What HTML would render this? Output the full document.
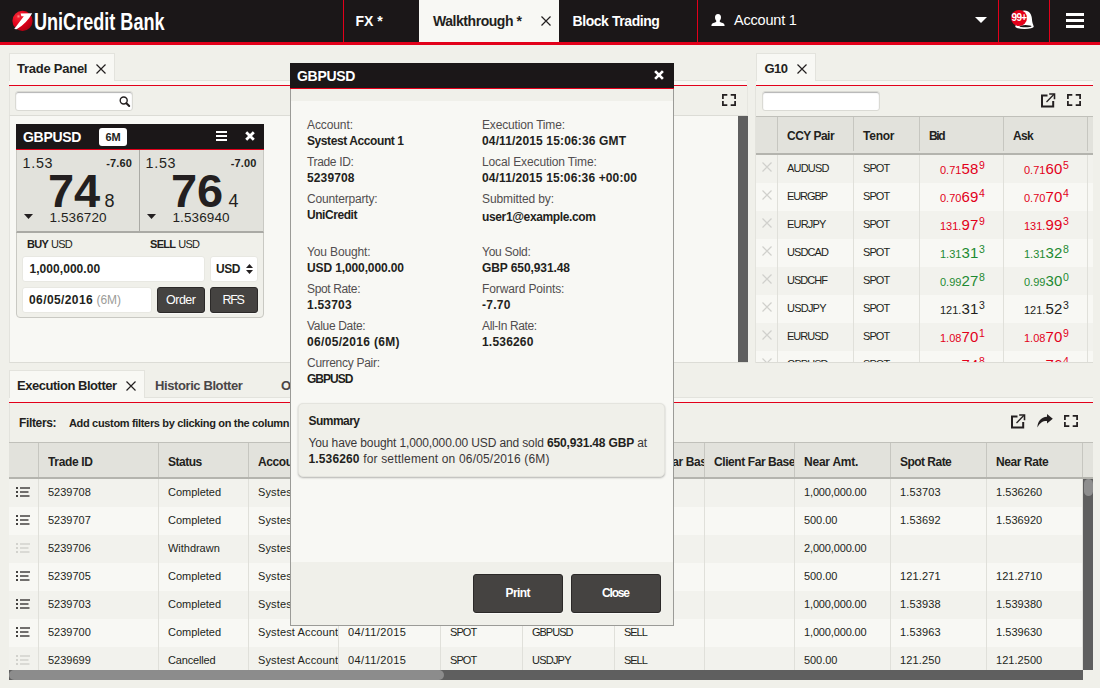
<!DOCTYPE html>
<html lang="en">
<head>
<meta charset="utf-8">
<title>UniCredit Bank - FX</title>
<style>
*{box-sizing:border-box;margin:0;padding:0}
html,body{width:1100px;height:688px;overflow:hidden}
body{position:relative;background:#f0f0ea;font-family:"Liberation Sans",sans-serif;font-size:12px;color:#231f20}
.abs{position:absolute}
.t{position:absolute;white-space:nowrap;line-height:1;letter-spacing:-0.3px}
.b{font-weight:bold}
.w{color:#fff}
svg{position:absolute;overflow:visible}
/* header */
#hdr{position:absolute;left:0;top:0;width:1100px;height:45px;background:#1b1718;border-bottom:3px solid #e2001a}
.vsep{position:absolute;top:0;width:1px;height:42px;background:#e2001a}
#tabwalk{position:absolute;left:419px;top:0;width:140px;height:42px;background:#f8f8f4}
/* panels */
.light{background:#f8f8f4}
.redline{position:absolute;height:1px;background:#e2001a}
.tab{position:absolute;background:#f8f8f4;border:1px solid #e3e3dd;border-bottom:none}
.inp{position:absolute;background:#fff;border:1px solid #dadad4;border-radius:3px}
.btn{position:absolute;background:#454341;border:1px solid #2b2928;border-radius:3px;box-shadow:0 1px 0 rgba(255,255,255,.6)}
.ghdr{position:absolute;background:#e2e2dc;border-top:1px solid #c0c0ba;border-bottom:2px solid #b4b4ae}
.csep{position:absolute;width:1px;background:#c6c6c0}
.rsep{position:absolute;width:1px;background:#e0e0da}
.row{position:absolute;height:28px}
.odd{background:#f2f2ed}
.even{background:#f8f8f4}
.c{position:absolute;white-space:nowrap;line-height:1;font-size:11px;letter-spacing:-0.2px;color:#231f20}
.h{position:absolute;white-space:nowrap;line-height:1;font-size:12px;font-weight:bold;letter-spacing:-0.3px;overflow:hidden}
.lbl{position:absolute;white-space:nowrap;line-height:1;font-size:12px;letter-spacing:-0.25px;color:#524e4f}
.val{position:absolute;white-space:nowrap;line-height:1;font-size:12px;font-weight:bold;letter-spacing:-0.1px;color:#231f20}
.red{color:#e2001a}
.grn{color:#1e8a32}
.px{position:absolute;white-space:nowrap;line-height:1;letter-spacing:0}
.px .s{font-size:11px}
.px .m{font-size:15px;letter-spacing:0.3px}
.px .u{font-size:10.5px;position:relative;top:-4.6px;margin-left:0.4px}
</style>
</head>
<body>
<!-- ===== HEADER ===== -->
<div id="hdr">
  <div id="tabwalk"></div>
  <div class="vsep" style="left:343px"></div>
  <div class="vsep" style="left:697px"></div>
  <div class="vsep" style="left:998px"></div>
  <div class="vsep" style="left:1049px"></div>
  <!-- logo -->
  <svg style="left:12px;top:10px" width="22" height="22" viewBox="0 0 22 22">
    <defs><radialGradient id="rg" cx="0.3" cy="0.28" r="0.85"><stop offset="0" stop-color="#ff8a8a"/><stop offset="0.12" stop-color="#f02030"/><stop offset="0.5" stop-color="#e2001a"/><stop offset="1" stop-color="#a80010"/></radialGradient></defs>
    <circle cx="10.5" cy="10.8" r="10.1" fill="url(#rg)"/>
    <path d="M8.6 3.4 L20.2 3.2 Q15 13 4.6 19.3 L2.2 19 L11.8 6.2 L9.4 6.2 Z" fill="#fff"/>
  </svg>
  <div class="t b w" id="logotxt" style="left:33.6px;top:10.5px;font-size:23px;letter-spacing:0;transform-origin:0 0;transform:scaleX(0.786)">UniCredit Bank</div>
  <!-- tabs -->
  <div class="t b w" style="left:355.5px;top:14.4px;font-size:14px;letter-spacing:0">FX *</div>
  <div class="t b" style="left:433px;top:14.4px;font-size:14px;letter-spacing:-0.45px">Walkthrough *</div>
  <svg style="left:541px;top:16px" width="10" height="10" viewBox="0 0 10 10"><path d="M0.5 0.5 L9.5 9.5 M9.5 0.5 L0.5 9.5" stroke="#231f20" stroke-width="1.2" fill="none"/></svg>
  <div class="t b w" style="left:572.5px;top:14.4px;font-size:14px;letter-spacing:-0.43px">Block Trading</div>
  <!-- account -->
  <svg style="left:711px;top:14px" width="14" height="12" viewBox="0 0 14 12"><path d="M7 0 C9 0 10 1.5 10 3.3 C10 5 9.3 6.3 8.6 6.9 C8.6 7.8 9.4 8.2 11 8.8 C12.8 9.5 13.6 10 13.6 12 L0.4 12 C0.4 10 1.2 9.5 3 8.8 C4.6 8.2 5.4 7.8 5.4 6.9 C4.7 6.3 4 5 4 3.3 C4 1.5 5 0 7 0 Z" fill="#fff"/></svg>
  <div class="t w" style="left:734px;top:12.9px;font-size:14.5px;letter-spacing:-0.2px">Account 1</div>
  <svg style="left:975px;top:17.3px" width="12" height="6" viewBox="0 0 12 6"><path d="M0 0 L12 0 L6 6 Z" fill="#fff"/></svg>
  <!-- bell + badge -->
  <svg style="left:1008px;top:8px" width="38" height="24" viewBox="0 0 38 24">
    <path d="M16.5 2.4 C21.5 2.4 23.6 6.5 23.9 10.5 C24.1 14 24.6 15.6 25.6 17.6 L7.4 17.6 C8.4 15.6 9 14 9.2 10.5 C9.4 6.5 11.5 2.4 16.5 2.4 Z" fill="#fff"/>
    <ellipse cx="16.5" cy="18.4" rx="9.3" ry="2.7" fill="#fff"/>
    <ellipse cx="17.5" cy="18.2" rx="6" ry="1.1" fill="#1b1718"/>
    <circle cx="11" cy="10" r="8" fill="#e2001a"/>
  </svg>
  <div class="t b w" style="left:1011.6px;top:13px;font-size:10px;letter-spacing:-0.75px">99+</div>
  <!-- hamburger -->
  <div class="abs" style="left:1066px;top:13px;width:18px;height:3px;background:#fff"></div>
  <div class="abs" style="left:1066px;top:19px;width:18px;height:3px;background:#fff"></div>
  <div class="abs" style="left:1066px;top:25px;width:18px;height:3px;background:#fff"></div>
</div>
<!-- ===== TRADE PANEL ===== -->
<div id="tp">
  <div class="tab" style="left:9px;top:53px;width:106px;height:28px"></div>
  <div class="abs light" style="left:9px;top:80px;width:738px;height:5px;border-top:1px solid #e3e3dd"></div>
  <div class="abs light" style="left:10px;top:80px;width:104px;height:2px"></div>
  <div class="redline" style="left:9px;top:85px;width:738px"></div>
  <div class="abs" style="left:9px;top:86px;width:739px;height:30px;border-left:1px solid #e3e3dd;border-right:1px solid #e6e6e0;border-bottom:1px solid #dcdcd6"></div>
  <div class="abs light" style="left:9px;top:116px;width:739px;height:247px;border-left:1px solid #e3e3dd;border-bottom:1px solid #dcdcd6"></div>
  <div class="abs" style="left:738px;top:116px;width:10px;height:246px;background:#5f5f5f"></div>
  <div class="t b" style="left:17px;top:62.2px;font-size:13px;letter-spacing:-0.25px">Trade Panel</div>
  <svg style="left:96px;top:64px" width="10" height="10" viewBox="0 0 10 10"><path d="M0.5 0.5 L9.5 9.5 M9.5 0.5 L0.5 9.5" stroke="#231f20" stroke-width="1.2" fill="none"/></svg>
  <!-- toolbar -->
  <div class="inp" style="left:15px;top:91px;width:118px;height:20px;box-shadow:inset 0 1px 1px rgba(0,0,0,.3)"></div>
  <svg style="left:118.5px;top:95.5px" width="11" height="11" viewBox="0 0 11 11"><circle cx="4.7" cy="4.5" r="3.5" stroke="#231f20" stroke-width="1.4" fill="none"/><path d="M7.4 7.2 L10.2 10" stroke="#231f20" stroke-width="2" stroke-linecap="round"/></svg>
  <svg style="left:722px;top:94px" width="14" height="12" viewBox="0 0 14 12"><path d="M0.9 5 V0.9 H5.3 M8.7 0.9 H13.1 V5 M13.1 7 V11.1 H8.7 M5.3 11.1 H0.9 V7" stroke="#231f20" stroke-width="1.75" fill="none"/></svg>

  <!-- tile -->
  <div class="abs" style="left:16px;top:124px;width:248px;height:194px;background:#f0f0ea;border:1px solid #c9c9c3;border-radius:0 0 4px 4px"></div>
  <div class="abs" style="left:16px;top:124px;width:248px;height:26px;background:#1b1718;border-bottom:1px solid #e2001a"></div>
  <div class="t b w" style="left:23px;top:130.3px;font-size:14px;letter-spacing:-0.3px">GBPUSD</div>
  <div class="abs" style="left:99px;top:128px;width:28px;height:18px;background:#fff;border-radius:3px"></div>
  <div class="t b" style="left:105.5px;top:132.2px;font-size:11px;letter-spacing:-0.2px">6M</div>
  <div class="abs" style="left:216px;top:131px;width:11px;height:2px;background:#fff"></div>
  <div class="abs" style="left:216px;top:135px;width:11px;height:2px;background:#fff"></div>
  <div class="abs" style="left:216px;top:139px;width:11px;height:2px;background:#fff"></div>
  <svg style="left:245px;top:131px" width="10" height="10" viewBox="0 0 10 10"><path d="M1.2 1.2 L8.8 8.8 M8.8 1.2 L1.2 8.8" stroke="#fff" stroke-width="2.8" fill="none"/></svg>
  <!-- price boxes -->
  <div class="abs" style="left:16px;top:150px;width:248px;height:83px;background:#e2e2dc;border-bottom:2px solid #aaaaa5;border-left:1px solid #c9c9c3;border-right:1px solid #c9c9c3"></div>
  <div class="abs" style="left:139px;top:150px;width:1px;height:82px;background:#aaaaa5"></div>

  <div class="px" style="left:22.6px;top:156.4px;font-size:14.3px;letter-spacing:0.7px">1.53</div>
  <div class="px b" style="right:968px;top:157.7px;font-size:11px;letter-spacing:0.15px">-7.60</div>
  <div class="px b" style="left:48px;top:166.8px;font-size:47px;letter-spacing:-0.2px">74</div>
  <div class="px" style="left:104.5px;top:191.5px;font-size:18px">8</div>
  <svg style="left:24px;top:214px" width="9" height="5" viewBox="0 0 9 5"><path d="M0 0 H9 L4.5 5 Z" fill="#231f20"/></svg>
  <div class="px" style="left:49.5px;top:210.7px;font-size:13.5px;letter-spacing:0.1px">1.536720</div>

  <div class="px" style="left:145.6px;top:156.4px;font-size:14.3px;letter-spacing:0.7px">1.53</div>
  <div class="px b" style="right:843.5px;top:157.7px;font-size:11px;letter-spacing:0.15px">-7.00</div>
  <div class="px b" style="left:171px;top:166.8px;font-size:47px;letter-spacing:-0.2px">76</div>
  <div class="px" style="left:228.5px;top:191.5px;font-size:18px">4</div>
  <svg style="left:147px;top:214px" width="9" height="5" viewBox="0 0 9 5"><path d="M0 0 H9 L4.5 5 Z" fill="#231f20"/></svg>
  <div class="px" style="left:172.5px;top:210.7px;font-size:13.5px;letter-spacing:0.1px">1.536940</div>

  <div class="t" style="left:27px;top:238.7px;font-size:11px;letter-spacing:-0.2px"><b style="letter-spacing:-0.7px">BUY</b> <span style="letter-spacing:-0.7px">USD</span></div>
  <div class="t" style="left:150px;top:238.7px;font-size:11px;letter-spacing:-0.2px"><b style="letter-spacing:-0.7px">SELL</b> <span style="letter-spacing:-0.7px">USD</span></div>
  <div class="inp" style="left:22px;top:256px;width:183px;height:26px;border-color:#e8e8e2;border-radius:3px"></div>
  <div class="t b" style="left:29.5px;top:263.3px;font-size:12px;letter-spacing:0.05px">1,000,000.00</div>
  <div class="inp" style="left:210px;top:256px;width:48px;height:26px;border-color:#e8e8e2;border-radius:3px"></div>
  <div class="t b" style="left:216px;top:263.3px;font-size:12px;letter-spacing:-0.4px">USD</div>
  <svg style="left:246px;top:264px" width="7" height="10" viewBox="0 0 7 10"><path d="M0 4 H7 L3.5 0 Z M0 6 H7 L3.5 10 Z" fill="#231f20"/></svg>
  <div class="inp" style="left:22px;top:287px;width:130px;height:26px;border-color:#e8e8e2;border-radius:3px"></div>
  <div class="t" style="left:29px;top:294.3px;font-size:12px;letter-spacing:0"><b style="letter-spacing:0.4px">06/05/2016</b> <span style="color:#9c9c98">(6M)</span></div>
  <div class="btn" style="left:157px;top:287px;width:48px;height:26px"></div>
  <div class="t w" style="left:166px;top:293.5px;font-size:12.5px;letter-spacing:-0.5px">Order</div>
  <div class="btn" style="left:210px;top:287px;width:48px;height:26px"></div>
  <div class="t w" style="left:222.5px;top:293.5px;font-size:12.5px;letter-spacing:-1.3px">RFS</div>
</div>
<!-- ===== G10 PANEL ===== -->
<div id="g10">
  <div class="tab" style="left:756px;top:53px;width:60px;height:28px"></div>
  <div class="abs light" style="left:756px;top:80px;width:337px;height:5px;border-top:1px solid #e3e3dd"></div>
  <div class="abs light" style="left:757px;top:80px;width:58px;height:2px"></div>
  <div class="redline" style="left:756px;top:85px;width:337px"></div>
  <div class="abs" style="left:755px;top:86px;width:1px;height:277px;background:#e3e3dd"></div>
  <div class="t b" style="left:764.5px;top:62.2px;font-size:13px;letter-spacing:-0.6px">G10</div>
  <svg style="left:797px;top:64px" width="10" height="10" viewBox="0 0 10 10"><path d="M0.5 0.5 L9.5 9.5 M9.5 0.5 L0.5 9.5" stroke="#231f20" stroke-width="1.2" fill="none"/></svg>
  <div class="inp" style="left:762px;top:91px;width:118px;height:20px;box-shadow:inset 0 1px 1px rgba(0,0,0,.3)"></div>
  <svg style="left:1041px;top:92.5px" width="15" height="15" viewBox="0 0 15 15"><path d="M6.5 2.5 H1 V13.5 H12.2 V8" stroke="#231f20" stroke-width="2" fill="none"/><path d="M5.5 9 L13 1.3" stroke="#231f20" stroke-width="1.3" fill="none"/><path d="M8.2 1 H13.5 V6.3" stroke="#231f20" stroke-width="1.6" fill="none"/></svg>
  <svg style="left:1067px;top:94px" width="14" height="12" viewBox="0 0 14 12"><path d="M0.9 5 V0.9 H5.3 M8.7 0.9 H13.1 V5 M13.1 7 V11.1 H8.7 M5.3 11.1 H0.9 V7" stroke="#231f20" stroke-width="1.75" fill="none"/></svg>
  <div class="abs" style="left:756px;top:116px;width:337px;height:247px;overflow:hidden;background:#f8f8f4;border-bottom:1px solid #dcdcd6">
    <div class="ghdr" style="left:0;top:0;width:337px;height:39px"></div>
    <div class="csep" style="left:21px;top:1px;height:34px"></div>
    <div class="csep" style="left:97px;top:1px;height:34px"></div>
    <div class="csep" style="left:163px;top:1px;height:34px"></div>
    <div class="csep" style="left:247px;top:1px;height:34px"></div>
    <div class="csep" style="left:331px;top:1px;height:34px"></div>
    <div class="h" style="left:31px;top:13.9px;overflow:visible;letter-spacing:-0.505px">CCY Pair</div>
    <div class="h" style="left:107px;top:13.9px;overflow:visible;letter-spacing:-0.236px">Tenor</div>
    <div class="h" style="left:173px;top:13.9px;overflow:visible;letter-spacing:-1.315px">Bid</div>
    <div class="h" style="left:257px;top:13.9px;overflow:visible;letter-spacing:-0.632px">Ask</div>
    <div class="row odd" style="left:0;top:39px;width:337px">
      <div class="rsep" style="left:21px;top:0;height:28px"></div>
      <div class="rsep" style="left:97px;top:0;height:28px"></div>
      <div class="rsep" style="left:163px;top:0;height:28px"></div>
      <div class="rsep" style="left:247px;top:0;height:28px"></div>
      <div class="rsep" style="left:331px;top:0;height:28px"></div>
      <svg style="left:5.5px;top:7px" width="10" height="10" viewBox="0 0 10 10"><path d="M0.5 0.5 L9.5 9.5 M9.5 0.5 L0.5 9.5" stroke="#d0d0cc" stroke-width="1.2" fill="none"/></svg>
      <div class="c" style="left:31px;top:7.7px;letter-spacing:-0.81px">AUDUSD</div>
      <div class="c" style="left:107px;top:7.7px;letter-spacing:-0.916px">SPOT</div>
      <div class="px red" style="left:184px;top:5.5px"><span class="s">0.71</span><span class="m">58</span><span class="u">9</span></div>
      <div class="px red" style="left:268px;top:5.5px"><span class="s">0.71</span><span class="m">60</span><span class="u">5</span></div>
    </div>
    <div class="row even" style="left:0;top:67px;width:337px">
      <div class="rsep" style="left:21px;top:0;height:28px"></div>
      <div class="rsep" style="left:97px;top:0;height:28px"></div>
      <div class="rsep" style="left:163px;top:0;height:28px"></div>
      <div class="rsep" style="left:247px;top:0;height:28px"></div>
      <div class="rsep" style="left:331px;top:0;height:28px"></div>
      <svg style="left:5.5px;top:7px" width="10" height="10" viewBox="0 0 10 10"><path d="M0.5 0.5 L9.5 9.5 M9.5 0.5 L0.5 9.5" stroke="#d0d0cc" stroke-width="1.2" fill="none"/></svg>
      <div class="c" style="left:31px;top:7.7px;letter-spacing:-1.091px">EURGBP</div>
      <div class="c" style="left:107px;top:7.7px;letter-spacing:-0.916px">SPOT</div>
      <div class="px red" style="left:184px;top:5.5px"><span class="s">0.70</span><span class="m">69</span><span class="u">4</span></div>
      <div class="px red" style="left:268px;top:5.5px"><span class="s">0.70</span><span class="m">70</span><span class="u">4</span></div>
    </div>
    <div class="row odd" style="left:0;top:95px;width:337px">
      <div class="rsep" style="left:21px;top:0;height:28px"></div>
      <div class="rsep" style="left:97px;top:0;height:28px"></div>
      <div class="rsep" style="left:163px;top:0;height:28px"></div>
      <div class="rsep" style="left:247px;top:0;height:28px"></div>
      <div class="rsep" style="left:331px;top:0;height:28px"></div>
      <svg style="left:5.5px;top:7px" width="10" height="10" viewBox="0 0 10 10"><path d="M0.5 0.5 L9.5 9.5 M9.5 0.5 L0.5 9.5" stroke="#d0d0cc" stroke-width="1.2" fill="none"/></svg>
      <div class="c" style="left:31px;top:7.7px;letter-spacing:-0.8px">EURJPY</div>
      <div class="c" style="left:107px;top:7.7px;letter-spacing:-0.916px">SPOT</div>
      <div class="px red" style="left:184px;top:5.5px"><span class="s">131.</span><span class="m">97</span><span class="u">9</span></div>
      <div class="px red" style="left:268px;top:5.5px"><span class="s">131.</span><span class="m">99</span><span class="u">3</span></div>
    </div>
    <div class="row even" style="left:0;top:123px;width:337px">
      <div class="rsep" style="left:21px;top:0;height:28px"></div>
      <div class="rsep" style="left:97px;top:0;height:28px"></div>
      <div class="rsep" style="left:163px;top:0;height:28px"></div>
      <div class="rsep" style="left:247px;top:0;height:28px"></div>
      <div class="rsep" style="left:331px;top:0;height:28px"></div>
      <svg style="left:5.5px;top:7px" width="10" height="10" viewBox="0 0 10 10"><path d="M0.5 0.5 L9.5 9.5 M9.5 0.5 L0.5 9.5" stroke="#d0d0cc" stroke-width="1.2" fill="none"/></svg>
      <div class="c" style="left:31px;top:7.7px;letter-spacing:-0.89px">USDCAD</div>
      <div class="c" style="left:107px;top:7.7px;letter-spacing:-0.916px">SPOT</div>
      <div class="px grn" style="left:184px;top:5.5px"><span class="s">1.31</span><span class="m">31</span><span class="u">3</span></div>
      <div class="px grn" style="left:268px;top:5.5px"><span class="s">1.31</span><span class="m">32</span><span class="u">8</span></div>
    </div>
    <div class="row odd" style="left:0;top:151px;width:337px">
      <div class="rsep" style="left:21px;top:0;height:28px"></div>
      <div class="rsep" style="left:97px;top:0;height:28px"></div>
      <div class="rsep" style="left:163px;top:0;height:28px"></div>
      <div class="rsep" style="left:247px;top:0;height:28px"></div>
      <div class="rsep" style="left:331px;top:0;height:28px"></div>
      <svg style="left:5.5px;top:7px" width="10" height="10" viewBox="0 0 10 10"><path d="M0.5 0.5 L9.5 9.5 M9.5 0.5 L0.5 9.5" stroke="#d0d0cc" stroke-width="1.2" fill="none"/></svg>
      <div class="c" style="left:31px;top:7.7px;letter-spacing:-0.966px">USDCHF</div>
      <div class="c" style="left:107px;top:7.7px;letter-spacing:-0.916px">SPOT</div>
      <div class="px grn" style="left:184px;top:5.5px"><span class="s">0.99</span><span class="m">27</span><span class="u">8</span></div>
      <div class="px grn" style="left:268px;top:5.5px"><span class="s">0.99</span><span class="m">30</span><span class="u">0</span></div>
    </div>
    <div class="row even" style="left:0;top:179px;width:337px">
      <div class="rsep" style="left:21px;top:0;height:28px"></div>
      <div class="rsep" style="left:97px;top:0;height:28px"></div>
      <div class="rsep" style="left:163px;top:0;height:28px"></div>
      <div class="rsep" style="left:247px;top:0;height:28px"></div>
      <div class="rsep" style="left:331px;top:0;height:28px"></div>
      <svg style="left:5.5px;top:7px" width="10" height="10" viewBox="0 0 10 10"><path d="M0.5 0.5 L9.5 9.5 M9.5 0.5 L0.5 9.5" stroke="#d0d0cc" stroke-width="1.2" fill="none"/></svg>
      <div class="c" style="left:31px;top:7.7px;letter-spacing:-0.78px">USDJPY</div>
      <div class="c" style="left:107px;top:7.7px;letter-spacing:-0.916px">SPOT</div>
      <div class="px " style="left:184px;top:5.5px"><span class="s">121.</span><span class="m">31</span><span class="u">3</span></div>
      <div class="px " style="left:268px;top:5.5px"><span class="s">121.</span><span class="m">52</span><span class="u">3</span></div>
    </div>
    <div class="row odd" style="left:0;top:207px;width:337px">
      <div class="rsep" style="left:21px;top:0;height:28px"></div>
      <div class="rsep" style="left:97px;top:0;height:28px"></div>
      <div class="rsep" style="left:163px;top:0;height:28px"></div>
      <div class="rsep" style="left:247px;top:0;height:28px"></div>
      <div class="rsep" style="left:331px;top:0;height:28px"></div>
      <svg style="left:5.5px;top:7px" width="10" height="10" viewBox="0 0 10 10"><path d="M0.5 0.5 L9.5 9.5 M9.5 0.5 L0.5 9.5" stroke="#d0d0cc" stroke-width="1.2" fill="none"/></svg>
      <div class="c" style="left:31px;top:7.7px;letter-spacing:-0.97px">EURUSD</div>
      <div class="c" style="left:107px;top:7.7px;letter-spacing:-0.916px">SPOT</div>
      <div class="px red" style="left:184px;top:5.5px"><span class="s">1.08</span><span class="m">70</span><span class="u">1</span></div>
      <div class="px red" style="left:268px;top:5.5px"><span class="s">1.08</span><span class="m">70</span><span class="u">9</span></div>
    </div>
    <div class="row even" style="left:0;top:235px;width:337px">
      <div class="rsep" style="left:21px;top:0;height:28px"></div>
      <div class="rsep" style="left:97px;top:0;height:28px"></div>
      <div class="rsep" style="left:163px;top:0;height:28px"></div>
      <div class="rsep" style="left:247px;top:0;height:28px"></div>
      <div class="rsep" style="left:331px;top:0;height:28px"></div>
      <svg style="left:5.5px;top:7px" width="10" height="10" viewBox="0 0 10 10"><path d="M0.5 0.5 L9.5 9.5 M9.5 0.5 L0.5 9.5" stroke="#d0d0cc" stroke-width="1.2" fill="none"/></svg>
      <div class="c" style="left:31px;top:7.7px;letter-spacing:-1.011px">GBPUSD</div>
      <div class="c" style="left:107px;top:7.7px;letter-spacing:-0.916px">SPOT</div>
      <div class="px red" style="left:184px;top:5.5px"><span class="s">1.53</span><span class="m">74</span><span class="u">8</span></div>
      <div class="px red" style="left:268px;top:5.5px"><span class="s">1.53</span><span class="m">76</span><span class="u">4</span></div>
    </div>
  </div>
</div>
<!-- ===== BLOTTER PANEL ===== -->
<div id="bl">
  <div class="tab" style="left:9px;top:370px;width:136px;height:28px"></div>
  <div class="abs light" style="left:9px;top:397px;width:1084px;height:5px;border-top:1px solid #e3e3dd"></div>
  <div class="abs light" style="left:10px;top:397px;width:134px;height:2px"></div>
  <div class="redline" style="left:9px;top:402px;width:1084px"></div>
  <div class="t b" style="left:17px;top:379.2px;font-size:13px;letter-spacing:-0.47px">Execution Blotter</div>
  <svg style="left:126px;top:381px" width="10" height="10" viewBox="0 0 10 10"><path d="M0.5 0.5 L9.5 9.5 M9.5 0.5 L0.5 9.5" stroke="#231f20" stroke-width="1.2" fill="none"/></svg>
  <div class="t b" style="left:155px;top:379.2px;font-size:13px;letter-spacing:-0.4px;color:#4a4647">Historic Blotter</div>
  <div class="t b" style="left:281px;top:379.2px;font-size:13px;letter-spacing:-0.4px;color:#4a4647">Order Blotter</div>
  <div class="abs" style="left:9px;top:403px;width:1084px;height:39px;border-left:1px solid #e3e3dd"></div>
  <div class="t b" style="left:19px;top:416.9px;font-size:12px;letter-spacing:-0.35px">Filters:</div>
  <div class="t b" style="left:69px;top:418.2px;font-size:11px;letter-spacing:-0.33px">Add custom filters by clicking on the column headings</div>
  <svg style="left:1011px;top:413.5px" width="15" height="15" viewBox="0 0 15 15"><path d="M6.5 2.5 H1 V13.5 H12.2 V8" stroke="#231f20" stroke-width="2" fill="none"/><path d="M5.5 9 L13 1.3" stroke="#231f20" stroke-width="1.3" fill="none"/><path d="M8.2 1 H13.5 V6.3" stroke="#231f20" stroke-width="1.6" fill="none"/></svg>
  <svg style="left:1036.8px;top:414px" width="16" height="14" viewBox="0 0 16 14"><path d="M10 0 L15.8 4.8 L10 9.6 V6.9 C6 6.7 2.8 8.5 0.4 13.6 C0.6 7.5 4 3 10 2.8 Z" fill="#231f20"/></svg>
  <svg style="left:1064px;top:415px" width="14" height="12" viewBox="0 0 14 12"><path d="M0.9 5 V0.9 H5.3 M8.7 0.9 H13.1 V5 M13.1 7 V11.1 H8.7 M5.3 11.1 H0.9 V7" stroke="#231f20" stroke-width="1.75" fill="none"/></svg>
  <div class="abs" style="left:9px;top:442px;width:1084px;height:228px;overflow:hidden;background:#f8f8f4">
    <div class="ghdr" style="left:0;top:0;width:1084px;height:37px"></div>
    <div class="csep" style="left:29px;top:1px;height:34px"></div>
    <div class="csep" style="left:149px;top:1px;height:34px"></div>
    <div class="csep" style="left:239px;top:1px;height:34px"></div>
    <div class="csep" style="left:329px;top:1px;height:34px"></div>
    <div class="csep" style="left:431px;top:1px;height:34px"></div>
    <div class="csep" style="left:513px;top:1px;height:34px"></div>
    <div class="csep" style="left:605px;top:1px;height:34px"></div>
    <div class="csep" style="left:695px;top:1px;height:34px"></div>
    <div class="csep" style="left:785px;top:1px;height:34px"></div>
    <div class="csep" style="left:881px;top:1px;height:34px"></div>
    <div class="csep" style="left:977px;top:1px;height:34px"></div>
    <div class="csep" style="left:1073px;top:1px;height:34px"></div>
    <div class="h" style="left:39px;top:14px;width:110px;height:14px;letter-spacing:-0.336px">Trade ID</div>
    <div class="h" style="left:159px;top:14px;width:80px;height:14px;letter-spacing:-0.485px">Status</div>
    <div class="h" style="left:249px;top:14px;width:80px;height:14px;letter-spacing:-0.42px">Account</div>
    <div class="h" style="left:339px;top:14px;width:92px;height:14px;letter-spacing:-0.42px">Trade Date</div>
    <div class="h" style="left:441px;top:14px;width:72px;height:14px;letter-spacing:-0.236px">Tenor</div>
    <div class="h" style="left:523px;top:14px;width:82px;height:14px;letter-spacing:-0.505px">CCY Pair</div>
    <div class="h" style="left:615px;top:14px;width:80px;height:14px;letter-spacing:-0.42px">Client Near Base</div>
    <div class="h" style="left:705px;top:14px;width:80px;height:14px;letter-spacing:-0.42px">Client Far Base</div>
    <div class="h" style="left:795px;top:14px;width:86px;height:14px;letter-spacing:-0.23px">Near Amt.</div>
    <div class="h" style="left:891px;top:14px;width:86px;height:14px;letter-spacing:-0.526px">Spot Rate</div>
    <div class="h" style="left:987px;top:14px;width:86px;height:14px;letter-spacing:-0.416px">Near Rate</div>
    <div class="row odd" style="left:0;top:37px;width:1074px">
      <div class="rsep" style="left:29px;top:0;height:28px"></div>
      <div class="rsep" style="left:149px;top:0;height:28px"></div>
      <div class="rsep" style="left:239px;top:0;height:28px"></div>
      <div class="rsep" style="left:329px;top:0;height:28px"></div>
      <div class="rsep" style="left:431px;top:0;height:28px"></div>
      <div class="rsep" style="left:513px;top:0;height:28px"></div>
      <div class="rsep" style="left:605px;top:0;height:28px"></div>
      <div class="rsep" style="left:695px;top:0;height:28px"></div>
      <div class="rsep" style="left:785px;top:0;height:28px"></div>
      <div class="rsep" style="left:881px;top:0;height:28px"></div>
      <div class="rsep" style="left:977px;top:0;height:28px"></div>
      <div class="rsep" style="left:1073px;top:0;height:28px"></div>
      <svg style="left:7px;top:7.6px" width="14" height="10" viewBox="0 0 14 10"><path d="M0 1 H2 M0 5 H2 M0 9 H2" stroke="#454341" stroke-width="2" fill="none"/><path d="M4 1 H14 M4 5 H12.5 M4 9 H13.5" stroke="#454341" stroke-width="1.7" fill="none"/></svg>
      <div class="c" style="left:39px;top:8px;width:110px;overflow:hidden;height:13px;letter-spacing:0.0px">5239708</div>
      <div class="c" style="left:159px;top:8px;width:80px;overflow:hidden;height:13px;letter-spacing:-0.024px">Completed</div>
      <div class="c" style="left:249px;top:8px;width:80px;overflow:hidden;height:13px;letter-spacing:0.13px">Systest Account 1</div>
      <div class="c" style="left:339px;top:8px;width:92px;overflow:hidden;height:13px;letter-spacing:0.396px">04/11/2015</div>
      <div class="c" style="left:441px;top:8px;width:72px;overflow:hidden;height:13px;letter-spacing:-1.281px">6M</div>
      <div class="c" style="left:523px;top:8px;width:82px;overflow:hidden;height:13px;letter-spacing:-1.011px">GBPUSD</div>
      <div class="c" style="left:615px;top:8px;width:80px;overflow:hidden;height:13px;letter-spacing:-1.559px">BUY</div>
      <div class="c" style="left:795px;top:8px;width:86px;overflow:hidden;height:13px;letter-spacing:-0.148px">1,000,000.00</div>
      <div class="c" style="left:891px;top:8px;width:86px;overflow:hidden;height:13px;letter-spacing:0.14px">1.53703</div>
      <div class="c" style="left:987px;top:8px;width:86px;overflow:hidden;height:13px;letter-spacing:0.05px">1.536260</div>
    </div>
    <div class="row even" style="left:0;top:65px;width:1074px">
      <div class="rsep" style="left:29px;top:0;height:28px"></div>
      <div class="rsep" style="left:149px;top:0;height:28px"></div>
      <div class="rsep" style="left:239px;top:0;height:28px"></div>
      <div class="rsep" style="left:329px;top:0;height:28px"></div>
      <div class="rsep" style="left:431px;top:0;height:28px"></div>
      <div class="rsep" style="left:513px;top:0;height:28px"></div>
      <div class="rsep" style="left:605px;top:0;height:28px"></div>
      <div class="rsep" style="left:695px;top:0;height:28px"></div>
      <div class="rsep" style="left:785px;top:0;height:28px"></div>
      <div class="rsep" style="left:881px;top:0;height:28px"></div>
      <div class="rsep" style="left:977px;top:0;height:28px"></div>
      <div class="rsep" style="left:1073px;top:0;height:28px"></div>
      <svg style="left:7px;top:7.6px" width="14" height="10" viewBox="0 0 14 10"><path d="M0 1 H2 M0 5 H2 M0 9 H2" stroke="#454341" stroke-width="2" fill="none"/><path d="M4 1 H14 M4 5 H12.5 M4 9 H13.5" stroke="#454341" stroke-width="1.7" fill="none"/></svg>
      <div class="c" style="left:39px;top:8px;width:110px;overflow:hidden;height:13px;letter-spacing:0.0px">5239707</div>
      <div class="c" style="left:159px;top:8px;width:80px;overflow:hidden;height:13px;letter-spacing:-0.024px">Completed</div>
      <div class="c" style="left:249px;top:8px;width:80px;overflow:hidden;height:13px;letter-spacing:0.13px">Systest Account 1</div>
      <div class="c" style="left:339px;top:8px;width:92px;overflow:hidden;height:13px;letter-spacing:0.396px">04/11/2015</div>
      <div class="c" style="left:441px;top:8px;width:72px;overflow:hidden;height:13px;letter-spacing:-0.916px">SPOT</div>
      <div class="c" style="left:523px;top:8px;width:82px;overflow:hidden;height:13px;letter-spacing:-1.011px">GBPUSD</div>
      <div class="c" style="left:615px;top:8px;width:80px;overflow:hidden;height:13px;letter-spacing:-1.559px">BUY</div>
      <div class="c" style="left:795px;top:8px;width:86px;overflow:hidden;height:13px;letter-spacing:-0.069px">500.00</div>
      <div class="c" style="left:891px;top:8px;width:86px;overflow:hidden;height:13px;letter-spacing:0.14px">1.53692</div>
      <div class="c" style="left:987px;top:8px;width:86px;overflow:hidden;height:13px;letter-spacing:0.05px">1.536920</div>
    </div>
    <div class="row odd" style="left:0;top:93px;width:1074px">
      <div class="rsep" style="left:29px;top:0;height:28px"></div>
      <div class="rsep" style="left:149px;top:0;height:28px"></div>
      <div class="rsep" style="left:239px;top:0;height:28px"></div>
      <div class="rsep" style="left:329px;top:0;height:28px"></div>
      <div class="rsep" style="left:431px;top:0;height:28px"></div>
      <div class="rsep" style="left:513px;top:0;height:28px"></div>
      <div class="rsep" style="left:605px;top:0;height:28px"></div>
      <div class="rsep" style="left:695px;top:0;height:28px"></div>
      <div class="rsep" style="left:785px;top:0;height:28px"></div>
      <div class="rsep" style="left:881px;top:0;height:28px"></div>
      <div class="rsep" style="left:977px;top:0;height:28px"></div>
      <div class="rsep" style="left:1073px;top:0;height:28px"></div>
      <svg style="left:7px;top:7.6px" width="14" height="10" viewBox="0 0 14 10"><path d="M0 1 H2 M0 5 H2 M0 9 H2" stroke="#d2d2cd" stroke-width="2" fill="none"/><path d="M4 1 H14 M4 5 H12.5 M4 9 H13.5" stroke="#d2d2cd" stroke-width="1.7" fill="none"/></svg>
      <div class="c" style="left:39px;top:8px;width:110px;overflow:hidden;height:13px;letter-spacing:0.0px">5239706</div>
      <div class="c" style="left:159px;top:8px;width:80px;overflow:hidden;height:13px;letter-spacing:-0.026px">Withdrawn</div>
      <div class="c" style="left:249px;top:8px;width:80px;overflow:hidden;height:13px;letter-spacing:0.13px">Systest Account 1</div>
      <div class="c" style="left:339px;top:8px;width:92px;overflow:hidden;height:13px;letter-spacing:0.396px">04/11/2015</div>
      <div class="c" style="left:441px;top:8px;width:72px;overflow:hidden;height:13px;letter-spacing:-0.916px">SPOT</div>
      <div class="c" style="left:523px;top:8px;width:82px;overflow:hidden;height:13px;letter-spacing:-1.011px">GBPUSD</div>
      <div class="c" style="left:615px;top:8px;width:80px;overflow:hidden;height:13px;letter-spacing:-1.559px">BUY</div>
      <div class="c" style="left:795px;top:8px;width:86px;overflow:hidden;height:13px;letter-spacing:-0.148px">2,000,000.00</div>
    </div>
    <div class="row even" style="left:0;top:121px;width:1074px">
      <div class="rsep" style="left:29px;top:0;height:28px"></div>
      <div class="rsep" style="left:149px;top:0;height:28px"></div>
      <div class="rsep" style="left:239px;top:0;height:28px"></div>
      <div class="rsep" style="left:329px;top:0;height:28px"></div>
      <div class="rsep" style="left:431px;top:0;height:28px"></div>
      <div class="rsep" style="left:513px;top:0;height:28px"></div>
      <div class="rsep" style="left:605px;top:0;height:28px"></div>
      <div class="rsep" style="left:695px;top:0;height:28px"></div>
      <div class="rsep" style="left:785px;top:0;height:28px"></div>
      <div class="rsep" style="left:881px;top:0;height:28px"></div>
      <div class="rsep" style="left:977px;top:0;height:28px"></div>
      <div class="rsep" style="left:1073px;top:0;height:28px"></div>
      <svg style="left:7px;top:7.6px" width="14" height="10" viewBox="0 0 14 10"><path d="M0 1 H2 M0 5 H2 M0 9 H2" stroke="#454341" stroke-width="2" fill="none"/><path d="M4 1 H14 M4 5 H12.5 M4 9 H13.5" stroke="#454341" stroke-width="1.7" fill="none"/></svg>
      <div class="c" style="left:39px;top:8px;width:110px;overflow:hidden;height:13px;letter-spacing:0.0px">5239705</div>
      <div class="c" style="left:159px;top:8px;width:80px;overflow:hidden;height:13px;letter-spacing:-0.024px">Completed</div>
      <div class="c" style="left:249px;top:8px;width:80px;overflow:hidden;height:13px;letter-spacing:0.13px">Systest Account 1</div>
      <div class="c" style="left:339px;top:8px;width:92px;overflow:hidden;height:13px;letter-spacing:0.396px">04/11/2015</div>
      <div class="c" style="left:441px;top:8px;width:72px;overflow:hidden;height:13px;letter-spacing:-0.916px">SPOT</div>
      <div class="c" style="left:523px;top:8px;width:82px;overflow:hidden;height:13px;letter-spacing:-0.78px">USDJPY</div>
      <div class="c" style="left:615px;top:8px;width:80px;overflow:hidden;height:13px;letter-spacing:-1.559px">BUY</div>
      <div class="c" style="left:795px;top:8px;width:86px;overflow:hidden;height:13px;letter-spacing:-0.069px">500.00</div>
      <div class="c" style="left:891px;top:8px;width:86px;overflow:hidden;height:13px;letter-spacing:0.14px">121.271</div>
      <div class="c" style="left:987px;top:8px;width:86px;overflow:hidden;height:13px;letter-spacing:0.05px">121.2710</div>
    </div>
    <div class="row odd" style="left:0;top:149px;width:1074px">
      <div class="rsep" style="left:29px;top:0;height:28px"></div>
      <div class="rsep" style="left:149px;top:0;height:28px"></div>
      <div class="rsep" style="left:239px;top:0;height:28px"></div>
      <div class="rsep" style="left:329px;top:0;height:28px"></div>
      <div class="rsep" style="left:431px;top:0;height:28px"></div>
      <div class="rsep" style="left:513px;top:0;height:28px"></div>
      <div class="rsep" style="left:605px;top:0;height:28px"></div>
      <div class="rsep" style="left:695px;top:0;height:28px"></div>
      <div class="rsep" style="left:785px;top:0;height:28px"></div>
      <div class="rsep" style="left:881px;top:0;height:28px"></div>
      <div class="rsep" style="left:977px;top:0;height:28px"></div>
      <div class="rsep" style="left:1073px;top:0;height:28px"></div>
      <svg style="left:7px;top:7.6px" width="14" height="10" viewBox="0 0 14 10"><path d="M0 1 H2 M0 5 H2 M0 9 H2" stroke="#454341" stroke-width="2" fill="none"/><path d="M4 1 H14 M4 5 H12.5 M4 9 H13.5" stroke="#454341" stroke-width="1.7" fill="none"/></svg>
      <div class="c" style="left:39px;top:8px;width:110px;overflow:hidden;height:13px;letter-spacing:0.0px">5239703</div>
      <div class="c" style="left:159px;top:8px;width:80px;overflow:hidden;height:13px;letter-spacing:-0.024px">Completed</div>
      <div class="c" style="left:249px;top:8px;width:80px;overflow:hidden;height:13px;letter-spacing:0.13px">Systest Account 1</div>
      <div class="c" style="left:339px;top:8px;width:92px;overflow:hidden;height:13px;letter-spacing:0.396px">04/11/2015</div>
      <div class="c" style="left:441px;top:8px;width:72px;overflow:hidden;height:13px;letter-spacing:-0.916px">SPOT</div>
      <div class="c" style="left:523px;top:8px;width:82px;overflow:hidden;height:13px;letter-spacing:-1.011px">GBPUSD</div>
      <div class="c" style="left:615px;top:8px;width:80px;overflow:hidden;height:13px;letter-spacing:-1.036px">SELL</div>
      <div class="c" style="left:795px;top:8px;width:86px;overflow:hidden;height:13px;letter-spacing:-0.148px">1,000,000.00</div>
      <div class="c" style="left:891px;top:8px;width:86px;overflow:hidden;height:13px;letter-spacing:0.14px">1.53938</div>
      <div class="c" style="left:987px;top:8px;width:86px;overflow:hidden;height:13px;letter-spacing:0.05px">1.539380</div>
    </div>
    <div class="row even" style="left:0;top:177px;width:1074px">
      <div class="rsep" style="left:29px;top:0;height:28px"></div>
      <div class="rsep" style="left:149px;top:0;height:28px"></div>
      <div class="rsep" style="left:239px;top:0;height:28px"></div>
      <div class="rsep" style="left:329px;top:0;height:28px"></div>
      <div class="rsep" style="left:431px;top:0;height:28px"></div>
      <div class="rsep" style="left:513px;top:0;height:28px"></div>
      <div class="rsep" style="left:605px;top:0;height:28px"></div>
      <div class="rsep" style="left:695px;top:0;height:28px"></div>
      <div class="rsep" style="left:785px;top:0;height:28px"></div>
      <div class="rsep" style="left:881px;top:0;height:28px"></div>
      <div class="rsep" style="left:977px;top:0;height:28px"></div>
      <div class="rsep" style="left:1073px;top:0;height:28px"></div>
      <svg style="left:7px;top:7.6px" width="14" height="10" viewBox="0 0 14 10"><path d="M0 1 H2 M0 5 H2 M0 9 H2" stroke="#454341" stroke-width="2" fill="none"/><path d="M4 1 H14 M4 5 H12.5 M4 9 H13.5" stroke="#454341" stroke-width="1.7" fill="none"/></svg>
      <div class="c" style="left:39px;top:8px;width:110px;overflow:hidden;height:13px;letter-spacing:0.0px">5239700</div>
      <div class="c" style="left:159px;top:8px;width:80px;overflow:hidden;height:13px;letter-spacing:-0.024px">Completed</div>
      <div class="c" style="left:249px;top:8px;width:80px;overflow:hidden;height:13px;letter-spacing:0.13px">Systest Account 1</div>
      <div class="c" style="left:339px;top:8px;width:92px;overflow:hidden;height:13px;letter-spacing:0.396px">04/11/2015</div>
      <div class="c" style="left:441px;top:8px;width:72px;overflow:hidden;height:13px;letter-spacing:-0.916px">SPOT</div>
      <div class="c" style="left:523px;top:8px;width:82px;overflow:hidden;height:13px;letter-spacing:-1.011px">GBPUSD</div>
      <div class="c" style="left:615px;top:8px;width:80px;overflow:hidden;height:13px;letter-spacing:-1.036px">SELL</div>
      <div class="c" style="left:795px;top:8px;width:86px;overflow:hidden;height:13px;letter-spacing:-0.148px">1,000,000.00</div>
      <div class="c" style="left:891px;top:8px;width:86px;overflow:hidden;height:13px;letter-spacing:0.14px">1.53963</div>
      <div class="c" style="left:987px;top:8px;width:86px;overflow:hidden;height:13px;letter-spacing:0.05px">1.539630</div>
    </div>
    <div class="row odd" style="left:0;top:205px;width:1074px">
      <div class="rsep" style="left:29px;top:0;height:28px"></div>
      <div class="rsep" style="left:149px;top:0;height:28px"></div>
      <div class="rsep" style="left:239px;top:0;height:28px"></div>
      <div class="rsep" style="left:329px;top:0;height:28px"></div>
      <div class="rsep" style="left:431px;top:0;height:28px"></div>
      <div class="rsep" style="left:513px;top:0;height:28px"></div>
      <div class="rsep" style="left:605px;top:0;height:28px"></div>
      <div class="rsep" style="left:695px;top:0;height:28px"></div>
      <div class="rsep" style="left:785px;top:0;height:28px"></div>
      <div class="rsep" style="left:881px;top:0;height:28px"></div>
      <div class="rsep" style="left:977px;top:0;height:28px"></div>
      <div class="rsep" style="left:1073px;top:0;height:28px"></div>
      <svg style="left:7px;top:7.6px" width="14" height="10" viewBox="0 0 14 10"><path d="M0 1 H2 M0 5 H2 M0 9 H2" stroke="#d2d2cd" stroke-width="2" fill="none"/><path d="M4 1 H14 M4 5 H12.5 M4 9 H13.5" stroke="#d2d2cd" stroke-width="1.7" fill="none"/></svg>
      <div class="c" style="left:39px;top:8px;width:110px;overflow:hidden;height:13px;letter-spacing:0.0px">5239699</div>
      <div class="c" style="left:159px;top:8px;width:80px;overflow:hidden;height:13px;letter-spacing:-0.178px">Cancelled</div>
      <div class="c" style="left:249px;top:8px;width:80px;overflow:hidden;height:13px;letter-spacing:0.13px">Systest Account 1</div>
      <div class="c" style="left:339px;top:8px;width:92px;overflow:hidden;height:13px;letter-spacing:0.396px">04/11/2015</div>
      <div class="c" style="left:441px;top:8px;width:72px;overflow:hidden;height:13px;letter-spacing:-0.916px">SPOT</div>
      <div class="c" style="left:523px;top:8px;width:82px;overflow:hidden;height:13px;letter-spacing:-0.78px">USDJPY</div>
      <div class="c" style="left:615px;top:8px;width:80px;overflow:hidden;height:13px;letter-spacing:-1.036px">SELL</div>
      <div class="c" style="left:795px;top:8px;width:86px;overflow:hidden;height:13px;letter-spacing:-0.069px">500.00</div>
      <div class="c" style="left:891px;top:8px;width:86px;overflow:hidden;height:13px;letter-spacing:0.14px">121.250</div>
      <div class="c" style="left:987px;top:8px;width:86px;overflow:hidden;height:13px;letter-spacing:0.05px">121.2500</div>
    </div>
    <div class="abs" style="left:1074px;top:37px;width:10px;height:191px;background:#5f5f5f"></div>
    <div class="abs" style="left:1074.5px;top:37px;width:9px;height:17px;background:#8e8e8e;border-radius:4.5px"></div>
  </div>
  <div class="abs" style="left:9px;top:670px;width:1074px;height:10px;background:#5f5f5f"></div>
  <div class="abs" style="left:9px;top:670px;width:435px;height:10px;background:#8c8c8c;border-radius:5px"></div>
</div>
<!-- ===== DIALOG ===== -->
<div id="dlg" class="abs" style="left:290px;top:63px;width:384px;height:563px;background:#f8f8f4;border:1px solid #9b9b97;border-top:none">
  <div class="abs" style="left:-1px;top:0;width:384px;height:26px;background:#1b1718;border-bottom:1px solid #e2001a"></div>
  <div class="abs" style="left:0;top:26px;width:382px;height:12px;background:#f0f0ea"></div>
  <div class="abs" style="left:0;top:499px;width:382px;height:63px;background:#f0f0ea"></div>
  <div class="t b w" style="left:6px;top:5.9px;font-size:14px;letter-spacing:-0.3px">GBPUSD</div>
  <svg style="left:363.3px;top:7.4px" width="10" height="10" viewBox="0 0 10 10"><path d="M1.1 1.1 L8.9 8.9 M8.9 1.1 L1.1 8.9" stroke="#fff" stroke-width="2.7" fill="none"/></svg>
  <div class="lbl" style="left:16px;top:55.5px;letter-spacing:-0.099px">Account:</div>
  <div class="val" style="left:16px;top:71.5px;letter-spacing:-0.412px">Systest Account 1</div>
  <div class="lbl" style="left:16px;top:92.5px;letter-spacing:-0.346px">Trade ID:</div>
  <div class="val" style="left:16px;top:108.5px;letter-spacing:0.13px">5239708</div>
  <div class="lbl" style="left:16px;top:129.5px;letter-spacing:-0.175px">Counterparty:</div>
  <div class="val" style="left:16px;top:145.5px;letter-spacing:-0.438px">UniCredit</div>
  <div class="lbl" style="left:16px;top:182.5px;letter-spacing:-0.135px">You Bought:</div>
  <div class="val" style="left:16px;top:198.5px;letter-spacing:-0.116px">USD 1,000,000.00</div>
  <div class="lbl" style="left:16px;top:219.5px;letter-spacing:-0.356px">Spot Rate:</div>
  <div class="val" style="left:16px;top:235.5px;letter-spacing:0.204px">1.53703</div>
  <div class="lbl" style="left:16px;top:256.5px;letter-spacing:-0.312px">Value Date:</div>
  <div class="val" style="left:16px;top:272.5px;letter-spacing:0.325px">06/05/2016 (6M)</div>
  <div class="lbl" style="left:16px;top:293.5px;letter-spacing:-0.284px">Currency Pair:</div>
  <div class="val" style="left:16px;top:309.5px;letter-spacing:-0.988px">GBPUSD</div>
  <div class="lbl" style="left:191px;top:55.5px;letter-spacing:-0.169px">Execution Time:</div>
  <div class="val" style="left:191px;top:71.5px;letter-spacing:0.147px">04/11/2015 15:06:36 GMT</div>
  <div class="lbl" style="left:191px;top:92.5px;letter-spacing:-0.13px">Local Execution Time:</div>
  <div class="val" style="left:191px;top:108.5px;letter-spacing:0.128px">04/11/2015 15:06:36 +00:00</div>
  <div class="lbl" style="left:191px;top:129.5px;letter-spacing:-0.114px">Submitted by:</div>
  <div class="val" style="left:191px;top:147.5px;letter-spacing:-0.36px">user1@example.com</div>
  <div class="lbl" style="left:191px;top:182.5px;letter-spacing:-0.267px">You Sold:</div>
  <div class="val" style="left:191px;top:198.5px;letter-spacing:-0.091px">GBP 650,931.48</div>
  <div class="lbl" style="left:191px;top:219.5px;letter-spacing:-0.116px">Forward Points:</div>
  <div class="val" style="left:191px;top:235.5px;letter-spacing:0.237px">-7.70</div>
  <div class="lbl" style="left:191px;top:256.5px;letter-spacing:-0.378px">All-In Rate:</div>
  <div class="val" style="left:191px;top:272.5px;letter-spacing:0.193px">1.536260</div>
  <div class="abs" style="left:7px;top:340px;width:367px;height:74px;background:#f0f0ea;border:1px solid #e4e4de;border-radius:5px;box-shadow:0 1px 2px rgba(0,0,0,.28)"></div>
  <div class="val" style="left:17.5px;top:352px;letter-spacing:-0.532px">Summary</div>
  <div class="t" style="left:17.5px;top:374px;font-size:12px;letter-spacing:-0.126px;color:#3a3637">You have bought 1,000,000.00 USD and sold <b style="color:#231f20;letter-spacing:-0.169px">650,931.48 GBP</b> at</div>
  <div class="t" style="left:17.5px;top:390.3px;font-size:12px;letter-spacing:0.173px;color:#3a3637"><b style="color:#231f20;letter-spacing:0.136px">1.536260</b> for settlement on 06/05/2016 (6M)</div>
  <div class="btn" style="left:182px;top:511px;width:90px;height:39px"></div>
  <div class="t b w" style="left:214.5px;top:524.3px;font-size:12px;letter-spacing:-0.584px">Print</div>
  <div class="btn" style="left:280px;top:511px;width:90px;height:39px"></div>
  <div class="t b w" style="left:311px;top:524.3px;font-size:12px;letter-spacing:-1.169px">Close</div>
</div>
</body>
</html>
